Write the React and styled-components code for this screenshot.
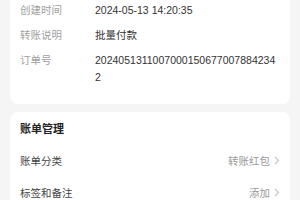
import React from 'react'
import styled, { createGlobalStyle } from 'styled-components'

const GlobalStyle = createGlobalStyle`
  html, body {
    margin: 0;
    padding: 0;
    background: #f5f5f5;
  }
  body {
    font-family: "Liberation Sans", "Noto Sans CJK SC", sans-serif;
    font-size: 10.5px;
    color: #333;
  }
`

const Page = styled.div`
  display: flex;
  flex-direction: column;
  gap: 8px;
  padding: 0 10px;
  overflow: hidden;
  height: 200px;
`

const Card = styled.section`
  background: #fff;
  border-radius: 8px;
  padding: ${props => props.padding || '0 10px'};
  margin-top: ${props => props.offset || 0};
  flex-shrink: 0;
`

const InfoRow = styled.div`
  display: grid;
  grid-template-columns: 75px 1fr;
  padding: 4px 0;
  line-height: 17px;
`

const Label = styled.div`
  color: #a0a0a0;
`

const Value = styled.div`
  color: #333;
  word-break: break-all;
`

const Heading = styled.div`
  height: 32px;
  display: flex;
  align-items: center;
  font-size: 11px;
  font-weight: 700;
  color: #222;
`

const MenuRow = styled.div`
  height: 32px;
  display: flex;
  align-items: center;
  justify-content: space-between;
  color: #444;
`

const Trail = styled.div`
  display: flex;
  align-items: center;
  gap: 4px;
  color: #9a9a9a;
`

const Chevron = () => (
  <svg width="6" height="9" viewBox="0 0 6 9" fill="none">
    <path d="M1 1l3.5 3.5L1 8" stroke="#c4c4c4" strokeWidth="1.1" />
  </svg>
)

const info = [
  ['创建时间', '2024-05-13 14:20:35'],
  ['转账说明', '批量付款'],
  ['订单号', '20240513110070001506770078842342'],
]

const menu = [
  ['账单分类', '转账红包'],
  ['标签和备注', '添加'],
]

export default function App() {
  return (
    <>
      <GlobalStyle />
      <Page>
        <Card offset="-14px" padding="11.5px 10px 14.5px">
          {info.map(([k, v]) => (
            <InfoRow key={k}>
              <Label>{k}</Label>
              <Value>{v}</Value>
            </InfoRow>
          ))}
        </Card>
        <Card>
          <Heading>账单管理</Heading>
          {menu.map(([k, v]) => (
            <MenuRow key={k}>
              <span>{k}</span>
              <Trail>
                {v}
                <Chevron />
              </Trail>
            </MenuRow>
          ))}
        </Card>
      </Page>
    </>
  )
}
